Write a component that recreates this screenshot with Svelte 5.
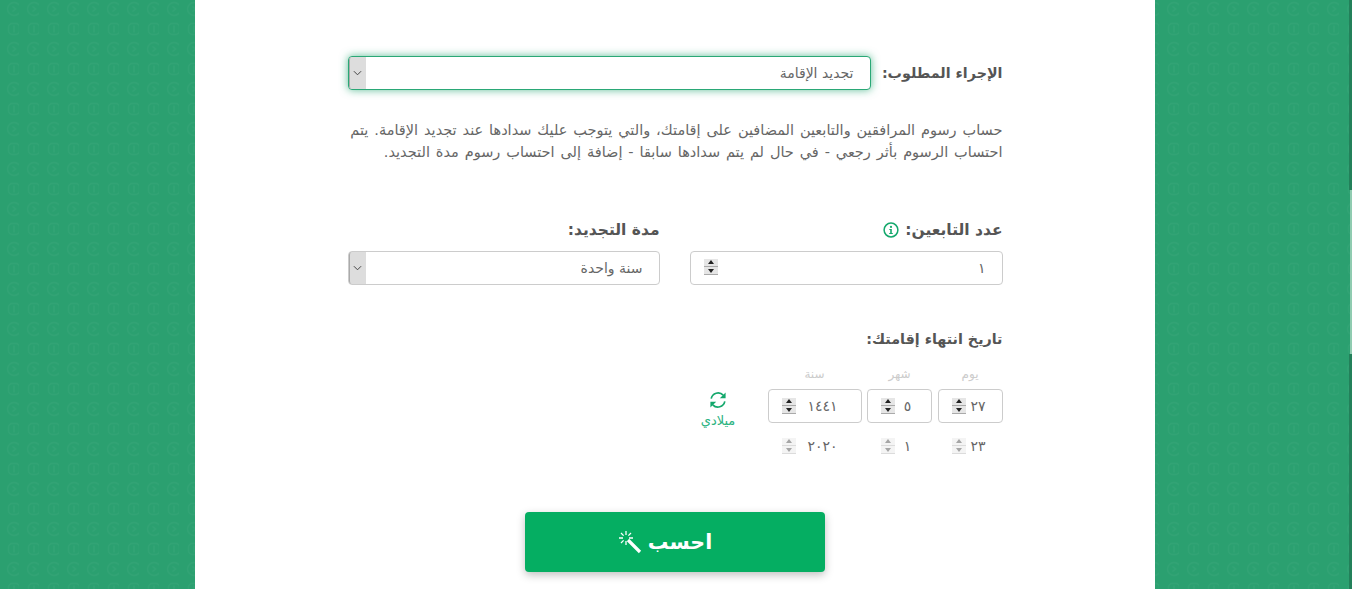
<script>
    const dateRows = [
        { day: '٢٧', month: '٥', year: '١٤٤١', boxed: true },
        { day: '٢٣', month: '١', year: '٢٠٢٠', boxed: false }
    ];
</script>

{#snippet spin()}
    <span class="spin">
        <span class="up"></span>
        <span class="down"></span>
    </span>
{/snippet}

{#snippet arrow()}
    <span class="arrow">
        <svg viewBox="0 0 10 6" width="9" height="6"><path d="M1 1l4 4 4-4" fill="none" stroke="#444" stroke-width="1.1"/></svg>
    </span>
{/snippet}

<div class="page">
    <svg class="pattern" width="100%" height="100%" aria-hidden="true">
        <defs>
            <pattern id="coins" width="20" height="40" patternUnits="userSpaceOnUse" x="-1" y="0">
                <g fill="none" stroke="#fff" stroke-opacity=".035" stroke-width="1.4">
                    <circle cx="15" cy="9" r="6.5"/>
                    <path d="M13.5 6.5l3 2.5-3 2.5"/>
                    <rect x="9.5" y="23.5" width="11" height="11" rx="4"/>
                    <path d="M15 25.5v7"/>
                </g>
            </pattern>
        </defs>
        <rect width="100%" height="100%" fill="url(#coins)"/>
    </svg>

    <main class="sheet" dir="rtl">
        <div class="form">
            <div class="action">
                <h3 class="tight">الإجراء المطلوب:</h3>
                <div class="control select focused">
                    تجديد الإقامة
                    {@render arrow()}
                </div>
            </div>

            <p class="note">حساب رسوم المرافقين والتابعين المضافين على إقامتك، والتي يتوجب عليك سدادها عند تجديد الإقامة. يتم احتساب الرسوم بأثر رجعي - في حال لم يتم سدادها سابقا - إضافة إلى احتساب رسوم مدة التجديد.</p>

            <div class="pair">
                <div>
                    <h3 class="with-icon">
                        عدد التابعين:
                        <svg viewBox="0 0 16 16" width="16" height="16">
                            <circle cx="8" cy="8" r="6.9" fill="none" stroke="#14a86c" stroke-width="1.5"/>
                            <circle cx="8" cy="4.9" r="1.1" fill="#14a86c"/>
                            <path d="M6.3 7h2.5v4h1v1H6.2v-1h1V8h-.9z" fill="#14a86c"/>
                        </svg>
                    </h3>
                    <div class="control number">
                        ١
                        {@render spin()}
                    </div>
                </div>
                <div>
                    <h3>مدة التجديد:</h3>
                    <div class="control select">
                        سنة واحدة
                        {@render arrow()}
                    </div>
                </div>
            </div>

            <h3 class="expiry tight">تاريخ انتهاء إقامتك:</h3>

            <div class="dates">
                <span class="head">يوم</span>
                <span class="head">شهر</span>
                <span class="head">سنة</span>
                <span></span>

                {#each dateRows as row}
                    {#each [row.day, row.month, row.year] as value}
                        <div class="date" class:boxed={row.boxed}>
                            {value}
                            {@render spin()}
                        </div>
                    {/each}
                    {#if row.boxed}
                        <div class="toggle">
                            <svg viewBox="0 0 18 18" width="18" height="18">
                                <path d="M2.2 7.6A7 7 0 0 1 14.2 4.2M15.8 10.4A7 7 0 0 1 3.8 13.8" fill="none" stroke="#14a86c" stroke-width="1.7"/>
                                <path d="M16.6 1.4V7.2H10.8zM1.4 16.6V10.8H7.2z" fill="#14a86c"/>
                            </svg>
                            <span>ميلادي</span>
                        </div>
                    {:else}
                        <span></span>
                    {/if}
                {/each}
            </div>
        </div>

        <button class="calc">
            احسب
            <svg viewBox="0 0 24 24" width="24" height="24" fill="none" stroke="#fff">
                <path d="M10 10l12 12" stroke-width="3.2"/>
                <path d="M8 1v4M8 11v4M1 8h4M11 8h4M3 3l2.6 2.6M10.4 5.6L13 3M3 13l2.6-2.6" stroke-width="1.3"/>
            </svg>
        </button>
    </main>

    <div class="track">
        <div class="thumb"></div>
    </div>
</div>

<style>
    :global(body) {
        margin: 0;
    }
    .page {
        position: relative;
        display: flex;
        justify-content: center;
        box-sizing: border-box;
        height: 589px;
        padding-right: 2px;
        overflow: hidden;
        background: #2ba070;
        font-family: "DejaVu Sans", sans-serif;
        color: #666;
    }
    .pattern {
        position: absolute;
        inset: 0;
    }
    .sheet {
        position: relative;
        display: flex;
        flex-direction: column;
        align-items: center;
        width: 960px;
        background: #fff;
    }
    .form {
        width: 655px;
        padding-top: 56px;
    }
    h3 {
        margin: 0;
        font-size: 15.5px;
        font-weight: 700;
        line-height: 20px;
        white-space: nowrap;
        color: #555;
    }
    h3.tight {
        font-size: 14.3px;
    }
    .action {
        display: flex;
        align-items: center;
        justify-content: space-between;
    }
    .control {
        position: relative;
        box-sizing: border-box;
        height: 34px;
        padding: 0 16px;
        border: 1px solid #ccc;
        border-radius: 4px;
        font-size: 14px;
        line-height: 32px;
        background: #fff;
    }
    .action .control {
        width: 523px;
    }
    .focused {
        border-color: #2aa876;
        box-shadow: 0 0 8px rgba(42, 168, 118, .75);
    }
    .arrow {
        position: absolute;
        left: 0;
        top: 0;
        bottom: 0;
        display: flex;
        align-items: center;
        justify-content: center;
        width: 16px;
        background: #ddd;
        border-radius: 3px 0 0 3px;
        border-left: 1px solid #aaa;
    }
    .note {
        margin: 29px 0 0;
        font-size: 14.5px;
        line-height: 22px;
        word-spacing: 1.3px;
    }
    .pair {
        display: grid;
        grid-template-columns: 313px 312px;
        justify-content: space-between;
        margin-top: 57px;
    }
    .pair h3 {
        margin-bottom: 11px;
    }
    .with-icon {
        display: flex;
        align-items: center;
        gap: 6px;
    }
    .expiry {
        margin-top: 44px;
    }
    .dates {
        display: grid;
        grid-template-columns: 65px 65px 94px 100px;
        grid-template-rows: 25px 34px 40px;
        column-gap: 5.5px;
        margin-top: 15px;
    }
    .head {
        font-size: 12px;
        line-height: 20px;
        color: #ccc;
        text-align: center;
    }
    .date {
        position: relative;
        box-sizing: border-box;
        height: 34px;
        padding-left: 16px;
        border: 1px solid transparent;
        border-radius: 4px;
        font-size: 14px;
        line-height: 32px;
        text-align: center;
    }
    .date.boxed {
        border-color: #ccc;
    }
    .date:not(.boxed) {
        align-self: end;
    }
    .date:not(.boxed) .spin {
        opacity: .4;
    }
    .spin {
        position: absolute;
        left: 13px;
        top: 8px;
        display: flex;
        flex-direction: column;
        width: 14px;
    }
    .number .spin {
        top: 7px;
    }
    .spin span {
        position: relative;
        display: block;
        height: 8px;
        box-sizing: border-box;
        background: #e6e6e6;
        border-bottom: 1px solid #aaa;
    }
    .spin span::after {
        content: "";
        position: absolute;
        left: 4px;
        border-left: 3px solid transparent;
        border-right: 3px solid transparent;
    }
    .up::after {
        top: 1px;
        border-bottom: 4px solid #222;
    }
    .down::after {
        top: 2px;
        border-top: 4px solid #222;
    }
    .toggle {
        display: flex;
        flex-direction: column;
        align-items: center;
        align-self: start;
        gap: 4px;
        width: 60px;
        margin-right: 14px;
        padding-top: 2px;
        font-size: 13px;
        color: #2bb381;
    }
    .toggle svg {
        flex-shrink: 0;
    }
    .calc {
        display: flex;
        align-items: center;
        justify-content: center;
        gap: 6px;
        width: 300px;
        height: 60px;
        margin-top: 49px;
        padding: 0 0 0 0;
        padding-right: 20px;
        border: 0;
        border-radius: 4px;
        background: #05ae62;
        box-shadow: 0 3px 8px rgba(0, 0, 0, .25);
        font-family: inherit;
        font-size: 20.5px;
        font-weight: 700;
        color: #fff;
    }
    .track {
        position: absolute;
        top: 0;
        right: 0;
        bottom: 0;
        width: 3px;
        background: linear-gradient(#23805a 190px, transparent 190px, transparent 354px, #23805a 354px);
    }
    .thumb {
        height: 164px;
        margin: 190px 0 0 1px;
        background: #8fcbb0;
    }
</style>
